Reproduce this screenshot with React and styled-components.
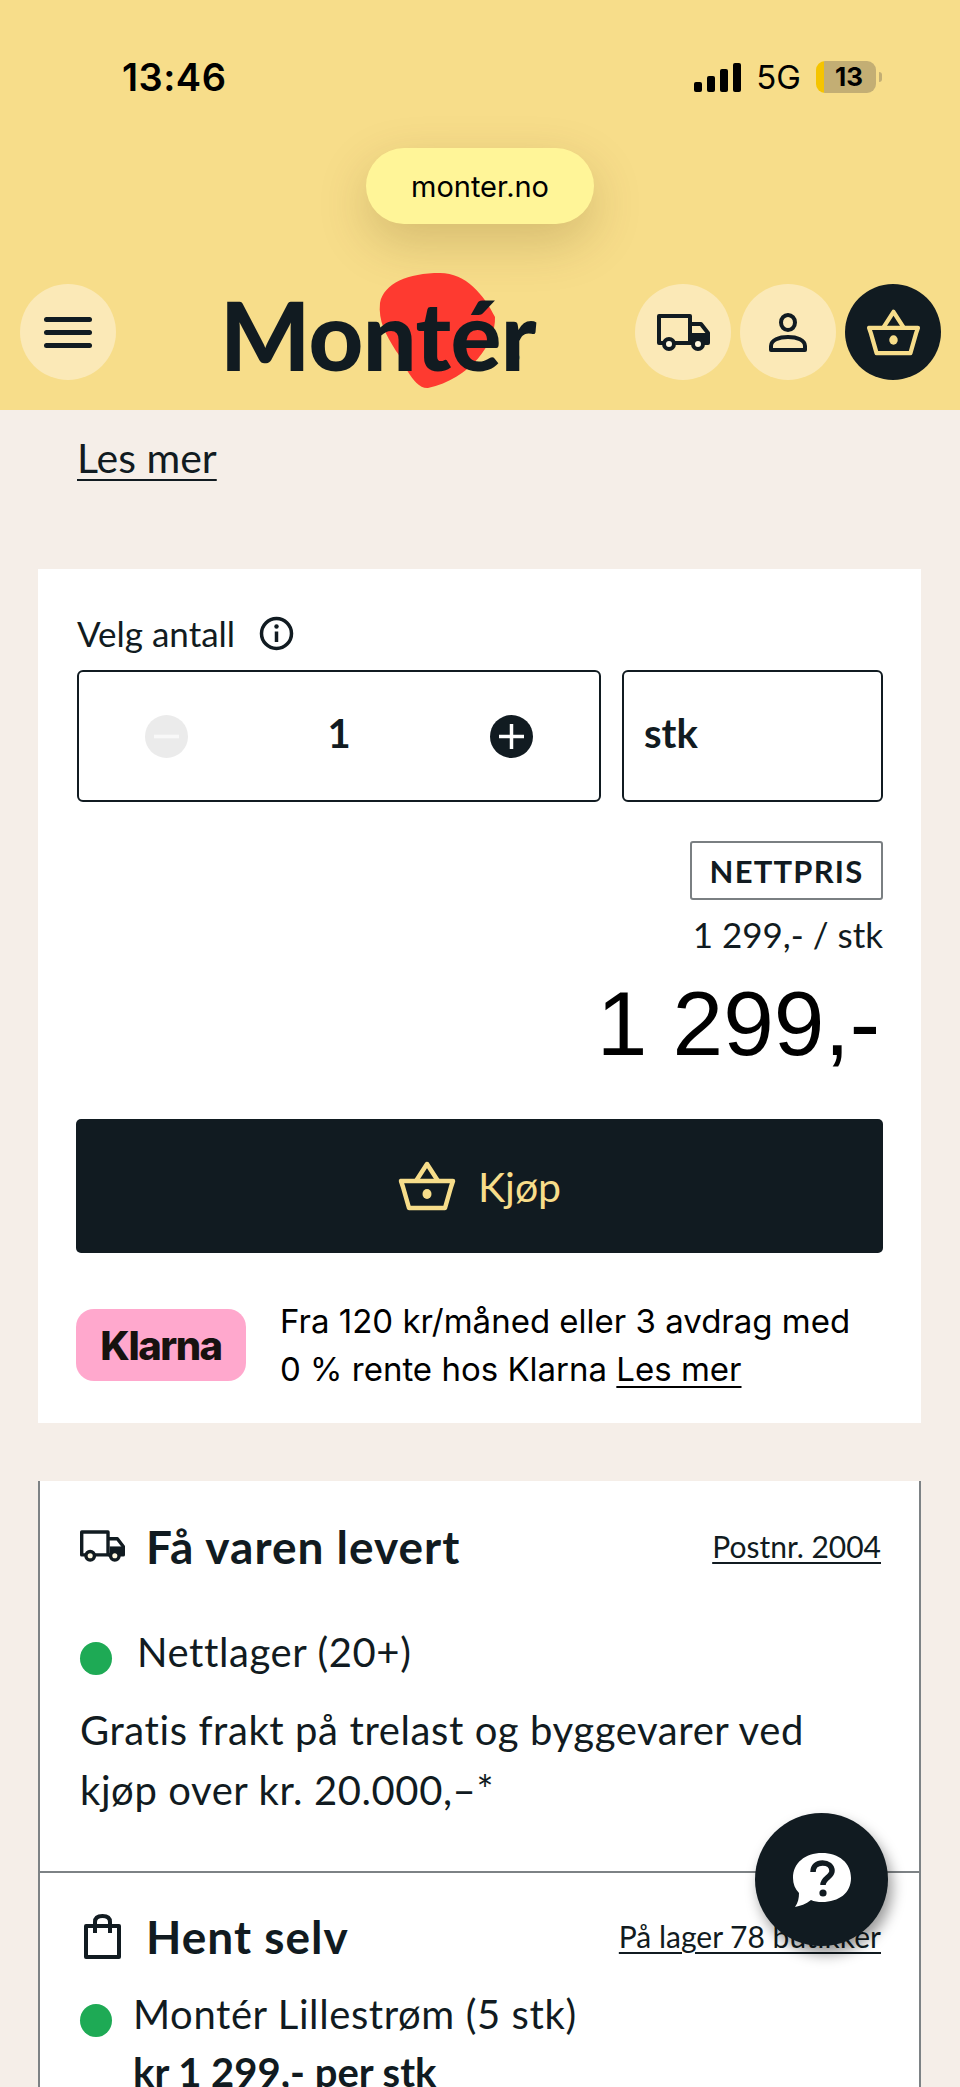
import React from "react";
import styled, { createGlobalStyle } from "styled-components";

const dark = "#111b21";
const yellow = "#f7dd8a";

const GlobalStyle = createGlobalStyle`
  html, body {
    margin: 0;
    padding: 0;
    background: #f5eee8;
  }
  * {
    box-sizing: border-box;
  }
`;

const BasketIcon = ({ width, height }) => (
  <svg width={width} height={height} viewBox="0 0 58 50" fill="none" stroke={yellow} strokeWidth="4.5" strokeLinejoin="round">
    <path d="M18 20 L29 3 L40 20" />
    <path d="M3 20 H55 L53 26 L47 47 H11 L5 26 Z" />
    <ellipse cx="29" cy="33" rx="4.5" ry="5" fill={yellow} stroke="none" />
  </svg>
);

const TruckIcon = ({ width, height }) => (
  <svg width={width} height={height} viewBox="0 0 53 37" fill="none" stroke={dark} strokeWidth="4" strokeLinejoin="round">
    <path d="M7 29 H2 V2 H33 V29 H17" />
    <path d="M33 10 H44 L51 19 V29 H46 M36 29 H33" />
    <path d="M35 19 H51 V29 H35 Z" fill={dark} stroke="none" />
    <circle cx="12" cy="30" r="5" fill="#fff8e0" />
    <circle cx="41" cy="30" r="5" fill="#fff8e0" />
  </svg>
);

const UserIcon = () => (
  <svg width="38" height="39" viewBox="0 0 38 39" fill="none" stroke={dark} strokeWidth="4">
    <ellipse cx="19" cy="9.5" rx="7" ry="7.5" />
    <path d="M2 37 V33 C2 27 10 24 19 24 C28 24 36 27 36 33 V37 Z" strokeLinejoin="round" />
  </svg>
);

const BagIcon = () => (
  <svg width="39" height="45" viewBox="0 0 39 45" fill="none" stroke={dark} strokeWidth="4" strokeLinejoin="round">
    <path d="M3 12 H36 V43 H3 Z" />
    <path d="M12 19 V8 C12 4 15 2 19.5 2 C24 2 27 4 27 8 V19" />
  </svg>
);

const InfoIcon = () => (
  <svg width="35" height="35" viewBox="0 0 35 35" fill="none">
    <circle cx="17.5" cy="17.5" r="15" stroke={dark} strokeWidth="3.5" />
    <circle cx="17.5" cy="10.5" r="2.2" fill={dark} />
    <path d="M17.5 15.5 V26" stroke={dark} strokeWidth="3.5" />
  </svg>
);

const SignalIcon = () => (
  <svg width="47" height="29" viewBox="0 0 47 29" fill="#000">
    <rect x="0" y="19" width="8" height="10" rx="2" />
    <rect x="13" y="13" width="8" height="16" rx="2" />
    <rect x="26" y="6" width="8" height="23" rx="2" />
    <rect x="39" y="0" width="8" height="29" rx="2" />
  </svg>
);

const RoundStepIcon = ({ plus }) => (
  <svg width="43" height="43" viewBox="0 0 43 43">
    <circle cx="21.5" cy="21.5" r="21.5" fill={plus ? dark : "#ebebeb"} />
    <path d="M9 21.5 H34" stroke={plus ? "#fff" : "#f8f8f8"} strokeWidth="3.5" />
    {plus && <path d="M21.5 9 V34" stroke="#fff" strokeWidth="3.5" />}
  </svg>
);

const HelpIcon = () => (
  <svg width="58" height="54" viewBox="0 0 58 54">
    <path
      d="M29 0 C46 0 58 10 58 25 C58 40 46 49 29 49 C25 49 21 48.5 18 47 C13 51 7 53 2 54 C5 50 6 45 6 40 C2 36 0 31 0 25 C0 10 12 0 29 0 Z"
      fill="#fff"
    />
    <path d="M20 19 C20 13 24 10 29.5 10 C35 10 39 13 39 18 C39 24 30 25 30 32" fill="none" stroke={dark} strokeWidth="5.5" />
    <circle cx="30" cy="40" r="3.6" fill={dark} />
  </svg>
);

const StatusBar = styled.div`
  display: flex;
  align-items: center;
  height: 44px;
  padding: 0 84px 0 122px;
  font-family: Inter, "Liberation Sans", sans-serif;
  color: #000;
`;

const Clock = styled.span`
  font-size: 38px;
  font-weight: 600;
  letter-spacing: 0.5px;
`;

const StatusRight = styled.div`
  display: flex;
  align-items: center;
  margin-left: auto;
`;

const Network = styled.span`
  font-size: 33px;
  font-weight: 400;
  margin-left: 15px;
  margin-right: 15px;
`;

const Battery = styled.div`
  position: relative;
  width: 60px;
  height: 32px;
  border-radius: 9px;
  background: linear-gradient(to right, #f5c400 0 8px, #c3ae74 8px);
  font-size: 26px;
  font-weight: 700;
  text-align: center;
  line-height: 32px;
  padding-left: 6px;

  &::after {
    content: "";
    position: absolute;
    right: -6px;
    top: 11px;
    width: 3px;
    height: 10px;
    border-radius: 0 3px 3px 0;
    background: #c3ae74;
  }
`;

const Header = styled.header`
  display: flex;
  flex-direction: column;
  height: 410px;
  padding-top: 55px;
  background: ${yellow};
`;

const AddressPill = styled.div`
  display: flex;
  align-items: center;
  justify-content: center;
  align-self: center;
  width: 228px;
  height: 76px;
  margin-top: 49px;
  border-radius: 38px;
  background: #fff598;
  box-shadow: 0 18px 50px rgba(90, 70, 20, 0.22);
  font-family: Inter, "Liberation Sans", sans-serif;
  font-size: 29px;
  color: #000;
`;

const Nav = styled.nav`
  position: relative;
  display: flex;
  align-items: center;
  margin-top: 60px;
  padding: 0 19px 0 20px;
`;

const Round = styled.div`
  display: flex;
  align-items: center;
  justify-content: center;
  flex-direction: column;
  gap: 8px;
  width: 96px;
  height: 96px;
  border-radius: 50%;
  background: ${(p) => (p.$dark ? dark : "#fbe9b7")};
`;

const BurgerLine = styled.span`
  display: block;
  width: 48px;
  height: 5px;
  border-radius: 3px;
  background: ${dark};
`;

const Logo = styled.div`
  position: relative;
  width: 300px;
  height: 96px;
  margin-left: 104px;
`;

const LogoBlob = styled.svg`
  position: absolute;
  left: 158px;
  top: -11px;
`;

const LogoText = styled.span`
  position: absolute;
  left: 0;
  top: -7px;
  font-family: Lato, sans-serif;
  font-size: 95px;
  font-weight: 900;
  line-height: 114px;
  letter-spacing: -0.5px;
  color: ${dark};
`;

const Registered = styled.span`
  position: absolute;
  left: 293px;
  top: 69px;
  font-family: "Liberation Sans", sans-serif;
  font-size: 9px;
  color: ${dark};
`;

const NavRight = styled.div`
  display: flex;
  gap: 9px;
  margin-left: auto;
`;

const Page = styled.div`
  height: 2087px;
  overflow: hidden;
  font-family: Lato, "Open Sans", sans-serif;
  color: ${dark};
`;

const TopLink = styled.a`
  display: block;
  padding-top: 24px;
  margin-left: 77px;
  font-size: 41px;
  line-height: 48px;
  text-decoration: underline;
  text-decoration-thickness: 2px;
  text-underline-offset: 6px;
  color: ${dark};
`;

const BuyCard = styled.section`
  margin: 87px 39px 0 38px;
  height: 854px;
  padding: 40px 38px 0 39px;
  background: #fff;
`;

const LabelRow = styled.div`
  display: flex;
  align-items: center;
  gap: 24px;
  height: 48px;
  font-size: 35px;
`;

const InputRow = styled.div`
  display: flex;
  gap: 21px;
  margin-top: 13px;
`;

const Stepper = styled.div`
  display: flex;
  align-items: center;
  justify-content: space-between;
  width: 524px;
  height: 132px;
  padding: 0 66px 0 66px;
  border: 2px solid ${dark};
  border-radius: 6px;
`;

const StepValue = styled.span`
  margin-top: -6px;
  font-size: 40px;
  font-weight: 700;
`;

const UnitBox = styled.div`
  display: flex;
  align-items: center;
  width: 261px;
  height: 132px;
  padding: 0 0 6px 20px;
  border: 2px solid ${dark};
  border-radius: 6px;
  font-size: 40px;
  font-weight: 700;
`;

const PriceBlock = styled.div`
  display: flex;
  flex-direction: column;
  align-items: flex-end;
  margin-top: 39px;
`;

const PriceTag = styled.span`
  display: flex;
  align-items: center;
  justify-content: center;
  width: 193px;
  height: 59px;
  border: 2px solid #7a7f82;
  border-radius: 3px;
  font-size: 31px;
  font-weight: 700;
  letter-spacing: 1.2px;
`;

const UnitPrice = styled.span`
  margin-top: 13px;
  font-size: 35px;
  line-height: 42px;
`;

const TotalPrice = styled.span`
  margin-top: 14px;
  margin-right: 3px;
  font-family: "Liberation Sans", sans-serif;
  font-size: 91px;
  line-height: 110px;
  color: #000;
`;

const BuyButton = styled.button`
  display: flex;
  align-items: center;
  justify-content: center;
  gap: 22px;
  width: 807px;
  height: 134px;
  margin: 40px 0 0 -1px;
  border: none;
  border-radius: 5px;
  background: ${dark};
  font-family: inherit;
  font-size: 41px;
  color: ${yellow};
`;

const KlarnaRow = styled.div`
  display: flex;
  align-items: center;
  gap: 34px;
  margin: 44px 0 0 -1px;
`;

const KlarnaBadge = styled.div`
  display: flex;
  align-items: center;
  justify-content: center;
  width: 170px;
  height: 72px;
  flex-shrink: 0;
  border-radius: 18px;
  background: #ffa8cd;
  font-family: Inter, sans-serif;
  font-size: 40px;
  font-weight: 800;
  letter-spacing: -1.5px;
  color: #17120f;
`;

const KlarnaText = styled.p`
  margin: 0;
  font-family: Inter, "Liberation Sans", sans-serif;
  font-size: 33px;
  line-height: 48px;
  color: #000;
`;

const KlarnaLink = styled.a`
  text-decoration: underline;
  text-decoration-thickness: 2px;
  text-underline-offset: 5px;
`;

const DeliveryCard = styled.section`
  margin: 58px 39px 0 38px;
  background: #fff;
  border-left: 2px solid #7d8285;
  border-right: 2px solid #7d8285;
`;

const DeliveryBlock = styled.div`
  height: ${(p) => p.$height}px;
  padding: ${(p) => p.$top}px 38px 0 40px;
  border-bottom: ${(p) => (p.$line ? "2px solid #7d8285" : "none")};
`;

const BlockHead = styled.div`
  display: flex;
  align-items: center;
  height: 56px;
`;

const HeadIcon = styled.span`
  display: flex;
  width: 66px;
  padding-left: ${(p) => p.$inset || 0}px;
`;

const BlockTitle = styled.h2`
  margin: 0;
  font-size: 46px;
  font-weight: 700;
  letter-spacing: 1px;
`;

const BlockLink = styled.a`
  margin-left: auto;
  font-size: 30px;
  text-decoration: underline;
  text-decoration-thickness: 2px;
  text-underline-offset: 4px;
`;

const StockRow = styled.div`
  display: flex;
  align-items: center;
  gap: ${(p) => p.$gap}px;
  margin-top: ${(p) => p.$top}px;
  font-size: 40px;
  line-height: 56px;
  letter-spacing: 0.6px;
`;

const StockDot = styled.span`
  width: 32px;
  height: 33px;
  margin-top: 12px;
  flex-shrink: 0;
  border-radius: 50%;
  background: #1eaa55;
`;

const FreightText = styled.p`
  margin: 20px 0 0;
  font-size: 40px;
  line-height: 60px;
  letter-spacing: 0.6px;
`;

const PriceLine = styled.div`
  margin: 0 0 0 53px;
  font-size: 40px;
  font-weight: 700;
  line-height: 60px;
`;

const HelpButton = styled.button`
  position: fixed;
  left: 755px;
  top: 1813px;
  display: flex;
  align-items: center;
  justify-content: center;
  width: 133px;
  height: 133px;
  border: none;
  border-radius: 50%;
  background: ${dark};
  box-shadow: 4px 8px 14px rgba(0, 0, 0, 0.4);
`;

export default function App() {
  return (
    <Page>
      <GlobalStyle />
      <Header>
        <StatusBar>
          <Clock>13:46</Clock>
          <StatusRight>
            <SignalIcon />
            <Network>5G</Network>
            <Battery>13</Battery>
          </StatusRight>
        </StatusBar>
        <AddressPill>monter.no</AddressPill>
        <Nav>
          <Round>
            <BurgerLine />
            <BurgerLine />
            <BurgerLine />
          </Round>
          <Logo>
            <LogoBlob width="118" height="116" viewBox="0 0 118 116">
              <path
                d="M2 30 C6 10 30 0 62 0 C88 0 106 22 117 44 C118 70 92 106 50 115 C34 116 24 84 18 78 C8 62 0 48 2 30 Z"
                fill="#fe3a30"
              />
            </LogoBlob>
            <LogoText>Montér</LogoText>
            <Registered>®</Registered>
          </Logo>
          <NavRight>
            <Round>
              <TruckIcon width={53} height={37} />
            </Round>
            <Round>
              <UserIcon />
            </Round>
            <Round $dark>
              <BasketIcon width={55} height={47} />
            </Round>
          </NavRight>
        </Nav>
      </Header>

      <TopLink>Les mer</TopLink>

      <BuyCard>
        <LabelRow>
          Velg antall
          <InfoIcon />
        </LabelRow>
        <InputRow>
          <Stepper>
            <RoundStepIcon />
            <StepValue>1</StepValue>
            <RoundStepIcon plus />
          </Stepper>
          <UnitBox>stk</UnitBox>
        </InputRow>
        <PriceBlock>
          <PriceTag>NETTPRIS</PriceTag>
          <UnitPrice>1 299,- / stk</UnitPrice>
          <TotalPrice>1 299,-</TotalPrice>
        </PriceBlock>
        <BuyButton>
          <BasketIcon width={58} height={50} />
          Kjøp
        </BuyButton>
        <KlarnaRow>
          <KlarnaBadge>Klarna</KlarnaBadge>
          <KlarnaText>
            Fra 120 kr/måned eller 3 avdrag med
            <br />0 % rente hos Klarna <KlarnaLink>Les mer</KlarnaLink>
          </KlarnaText>
        </KlarnaRow>
      </BuyCard>

      <DeliveryCard>
        <DeliveryBlock $height={392} $top={37} $line>
          <BlockHead>
            <HeadIcon>
              <TruckIcon width={45} height={32} />
            </HeadIcon>
            <BlockTitle>Få varen levert</BlockTitle>
            <BlockLink>Postnr. 2004</BlockLink>
          </BlockHead>
          <StockRow $gap={25} $top={50}>
            <StockDot />
            Nettlager (20+)
          </StockRow>
          <FreightText>
            Gratis frakt på trelast og byggevarer ved
            <br />
            kjøp over kr. 20.000,–*
          </FreightText>
        </DeliveryBlock>
        <DeliveryBlock $height={220} $top={35}>
          <BlockHead>
            <HeadIcon $inset={3}>
              <BagIcon />
            </HeadIcon>
            <BlockTitle>Hent selv</BlockTitle>
            <BlockLink>På lager 78 butikker</BlockLink>
          </BlockHead>
          <StockRow $gap={21} $top={22}>
            <StockDot />
            Montér Lillestrøm (5 stk)
          </StockRow>
          <PriceLine>kr 1 299,- per stk</PriceLine>
        </DeliveryBlock>
      </DeliveryCard>

      <HelpButton>
        <HelpIcon />
      </HelpButton>
    </Page>
  );
}
